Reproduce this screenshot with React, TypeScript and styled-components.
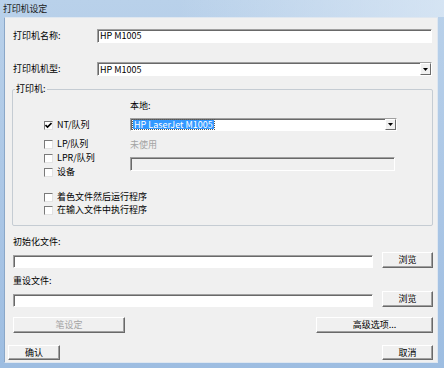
import styled, { createGlobalStyle } from 'styled-components'

const Global = createGlobalStyle`
  html, body {
    margin: 0;
    padding: 0;
    width: 444px;
    height: 368px;
    overflow: hidden;
  }
  * {
    box-sizing: border-box;
  }
`

const CheckMark = () => (
  <svg width="7" height="7" viewBox="0 0 7 7">
    <polyline points="0.5,3 2.5,5 6.5,1" fill="none" stroke="#000" strokeWidth="1.6" />
  </svg>
)

const DropArrow = () => (
  <svg width="5" height="3" viewBox="0 0 5 3">
    <polygon points="0,0 5,0 2.5,3" fill="#000" />
  </svg>
)

const Casilla = ({ marcada, texto }: { marcada?: boolean; texto: string }) => (
  <FilaCasilla>
    <Caja>{marcada && <CheckMark />}</Caja>
    <span>{texto}</span>
  </FilaCasilla>
)

const App = () => {
  return (
    <Marco>
      <Global />
      <BarraTitulo>打印机设定</BarraTitulo>
      <Cuerpo>
        <FilaCampo>
          <Etiqueta>打印机名称:</Etiqueta>
          <Entrada>HP M1005</Entrada>
        </FilaCampo>
        <FilaCampo $mt={19}>
          <Etiqueta>打印机机型:</Etiqueta>
          <Selector>
            <span>HP M1005</span>
            <BotonFlecha>
              <DropArrow />
            </BotonFlecha>
          </Selector>
        </FilaCampo>

        <Grupo>
          <Leyenda>打印机:</Leyenda>
          <GrupoColumnas>
            <ColumnaIzq>
              <Casilla marcada texto="NT/队列" />
              <Espacio $h={7} />
              <Casilla texto="LP/队列" />
              <Espacio $h={2} />
              <Casilla texto="LPR/队列" />
              <Espacio $h={2} />
              <Casilla texto="设备" />
            </ColumnaIzq>
            <ColumnaDer>
              <Etiqueta>本地:</Etiqueta>
              <Espacio $h={6} />
              <Selector $alto={13}>
                <Resaltado>HP LaserJet M1005</Resaltado>
                <BotonFlecha>
                  <DropArrow />
                </BotonFlecha>
              </Selector>
              <Espacio $h={8} />
              <Etiqueta $apagada>未使用</Etiqueta>
              <Espacio $h={6} />
              <Entrada $apagada $ancho={265} />
            </ColumnaDer>
          </GrupoColumnas>
          <Opciones>
            <Casilla texto="着色文件然后运行程序" />
            <Espacio $h={1} />
            <Casilla texto="在输入文件中执行程序" />
          </Opciones>
        </Grupo>

        <EtiquetaArchivo $mt={10}>初始化文件:</EtiquetaArchivo>
        <FilaArchivo $mt={4}>
          <Entrada $alto={13} />
          <Boton>浏览</Boton>
        </FilaArchivo>
        <EtiquetaArchivo $mt={7}>重设文件:</EtiquetaArchivo>
        <FilaArchivo $mt={4}>
          <Entrada $alto={13} />
          <Boton>浏览</Boton>
        </FilaArchivo>

        <FilaBotones $mt={10} $ml={5}>
          <Boton $ancho={112} disabled>笔设定</Boton>
          <Boton $ancho={117}>高级选项...</Boton>
        </FilaBotones>
        <FilaBotones $mt={12}>
          <Boton $ancho={52} $alto={15}>确认</Boton>
          <Boton $ancho={51} $alto={15}>取消</Boton>
        </FilaBotones>
      </Cuerpo>
    </Marco>
  )
}

const Marco = styled.div`
  width: 444px;
  height: 368px;
  padding: 0 6px 0 4px;
  background: linear-gradient(180deg, #b9d1ea 0%, #a9c5e5 60%, #9dbde1 100%);
  font-family: "Noto Sans CJK SC", "Liberation Sans", sans-serif;
  font-size: 9px;
  color: #000;
  display: flex;
  flex-direction: column;
`

const BarraTitulo = styled.div`
  height: 17px;
  display: flex;
  align-items: center;
  color: #1a1a1a;
  font-size: 9px;
  letter-spacing: -0.2px;
  background: linear-gradient(90deg, rgba(255,255,255,0) 40%, rgba(225,236,247,0.7) 100%);
  margin-right: -6px;
  margin-left: -4px;
  padding-left: 3px;
`

const Cuerpo = styled.div`
  height: 346px;
  background: #f0f0f0;
  border: 1px solid #dfe7f0;
  border-left-color: #8aa7c8;
  padding: 11px 4px 0 3px;
  display: flex;
  flex-direction: column;
`

const FilaCampo = styled.div<{ $mt?: number }>`
  display: grid;
  grid-template-columns: 84px 335px;
  align-items: center;
  margin-left: 5px;
  margin-top: ${p => p.$mt || 0}px;
  height: 14px;
`

const Etiqueta = styled.div<{ $apagada?: boolean }>`
  height: 12px;
  line-height: 12px;
  white-space: nowrap;
  color: ${p => (p.$apagada ? '#a3a3a3' : '#000')};
`

const Entrada = styled.div<{ $apagada?: boolean; $ancho?: number; $alto?: number }>`
  width: ${p => (p.$ancho ? `${p.$ancho}px` : 'auto')};
  height: ${p => p.$alto || 14}px;
  background: ${p => (p.$apagada ? '#f0f0f0' : '#fff')};
  border-top: 1px solid #a0a0a0;
  border-left: 1px solid #a0a0a0;
  border-bottom: 1px solid #fff;
  border-right: 1px solid #fff;
  box-shadow: inset 1px 1px 0 #696969;
  padding-left: 2px;
  display: flex;
  align-items: center;
  line-height: 12px;
  white-space: nowrap;
`

const Selector = styled.div<{ $alto?: number }>`
  height: ${p => p.$alto || 14}px;
  background: #fff;
  border-top: 1px solid #a0a0a0;
  border-left: 1px solid #a0a0a0;
  border-bottom: 1px solid #fff;
  border-right: 1px solid #fff;
  box-shadow: inset 1px 1px 0 #696969;
  padding-left: 2px;
  display: flex;
  align-items: center;
  justify-content: space-between;
  white-space: nowrap;
`

const BotonFlecha = styled.div`
  width: 11px;
  height: 100%;
  background: #f0f0f0;
  border-top: 1px solid #fff;
  border-left: 1px solid #fff;
  border-right: 1px solid #6a6a6a;
  border-bottom: 1px solid #6a6a6a;
  display: flex;
  align-items: center;
  justify-content: center;
`

const Resaltado = styled.span`
  background: #3399ff;
  color: #fff;
  padding: 0 1px;
  line-height: 9px;
  height: 9px;
  outline: 1px dotted #555;
`

const Grupo = styled.div`
  position: relative;
  margin: 13px 0 0 4px;
  width: 421px;
  height: 137px;
  border: 1px solid #c5ccd3;
  border-radius: 2px;
  padding: 10px 0 0 31px;
`

const Leyenda = styled.div`
  position: absolute;
  top: -7px;
  left: 2px;
  padding: 0 1px;
  background: #f0f0f0;
  line-height: 12px;
`

const GrupoColumnas = styled.div`
  display: grid;
  grid-template-columns: 86px 267px;
  align-items: start;
`

const ColumnaIzq = styled.div`
  display: flex;
  flex-direction: column;
  margin-top: 19px;
`

const ColumnaDer = styled.div`
  display: flex;
  flex-direction: column;
`

const Opciones = styled.div`
  display: flex;
  flex-direction: column;
  margin-top: 13px;
`

const Espacio = styled.div<{ $h: number }>`
  height: ${p => p.$h}px;
`

const FilaCasilla = styled.div`
  display: flex;
  align-items: center;
  gap: 4px;
  height: 12px;
  line-height: 12px;
  white-space: nowrap;
`

const Caja = styled.div`
  width: 9px;
  height: 9px;
  background: #fff;
  border-top: 1px solid #7a7a7a;
  border-left: 1px solid #7a7a7a;
  border-bottom: 1px solid #e3e3e3;
  border-right: 1px solid #e3e3e3;
  display: flex;
  align-items: center;
  justify-content: center;
`

const EtiquetaArchivo = styled.div<{ $mt: number }>`
  margin: ${p => p.$mt}px 0 0 5px;
  height: 12px;
  line-height: 12px;
`

const FilaArchivo = styled.div<{ $mt: number }>`
  display: grid;
  grid-template-columns: 360px 51px;
  column-gap: 9px;
  align-items: end;
  margin: ${p => p.$mt}px 0 0 5px;
  height: 16px;
`

const FilaBotones = styled.div<{ $mt: number; $ml?: number }>`
  display: flex;
  justify-content: space-between;
  margin: ${p => p.$mt}px 0 0 ${p => p.$ml || 0}px;
`

const Boton = styled.button<{ $ancho?: number; $alto?: number }>`
  width: ${p => p.$ancho || 51}px;
  height: ${p => p.$alto || 16}px;
  padding: 0;
  font-family: inherit;
  font-size: 9px;
  color: #000;
  background: #f0f0f0;
  border-top: 1px solid #fff;
  border-left: 1px solid #fff;
  border-right: 1px solid #696969;
  border-bottom: 1px solid #696969;
  box-shadow: inset -1px -1px 0 #a0a0a0;
  border-radius: 0;
  line-height: 12px;

  &:disabled {
    color: #a3a3a3;
  }
`

export default App
